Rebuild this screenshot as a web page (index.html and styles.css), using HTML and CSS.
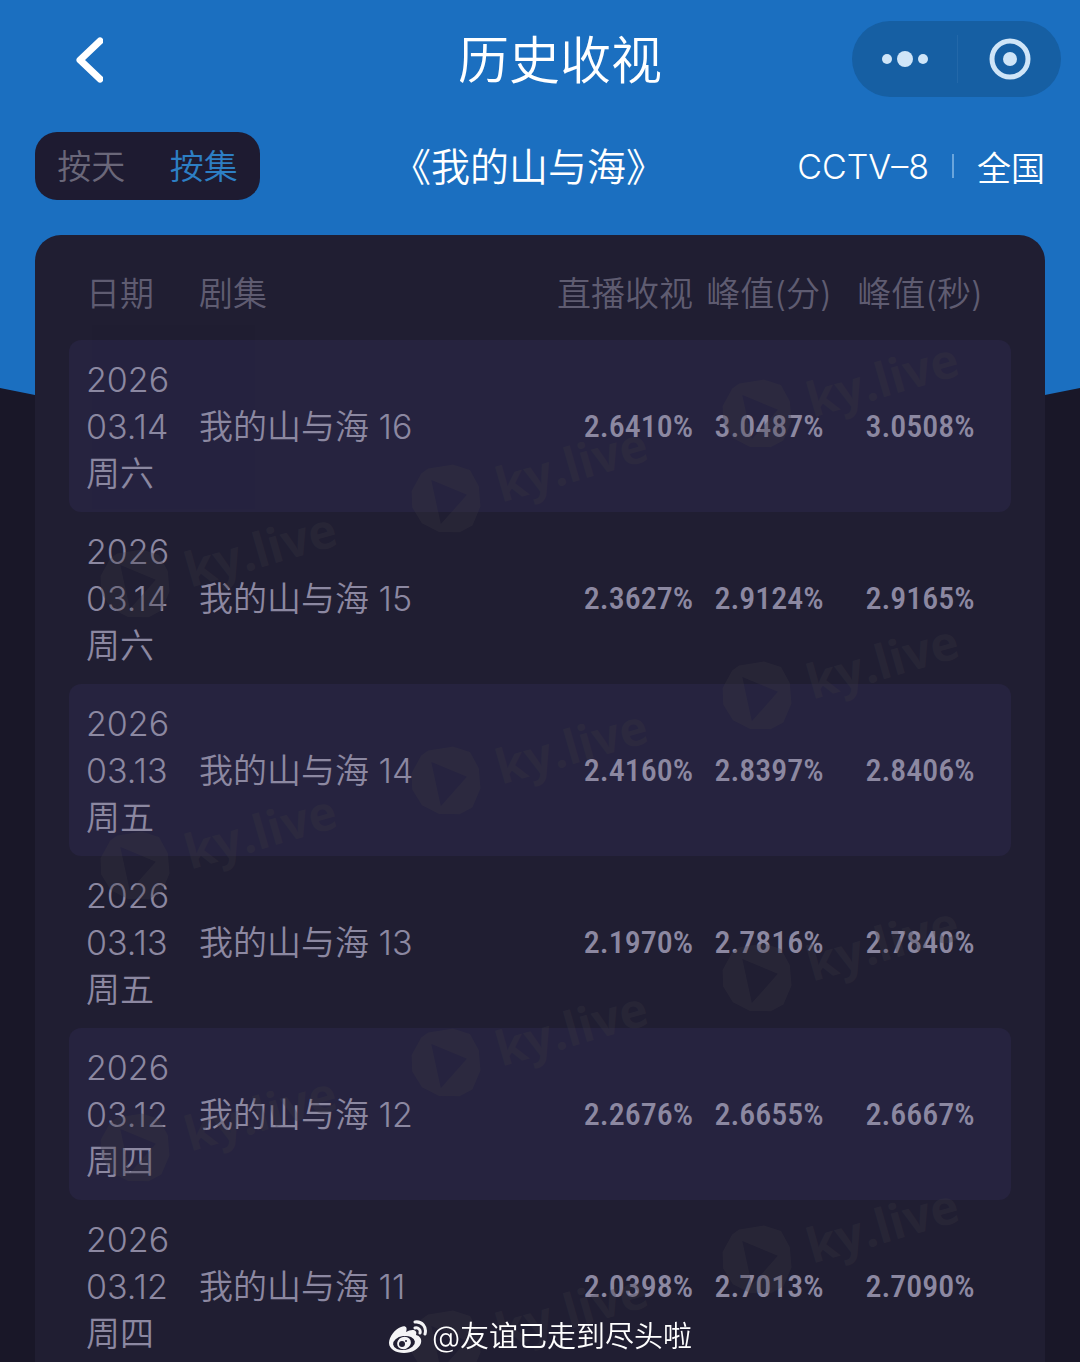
FILE: index.html
```html
<!DOCTYPE html>
<html lang="zh-CN">
<head>
    <meta charset="UTF-8">
    <meta name="viewport" content="width=device-width, initial-scale=1.0">
    <title>历史收视</title>
    <link rel="stylesheet" href="styles.css">
</head>
<body>
    <!-- shared logo, reused by every watermark -->
    <svg class="defs" aria-hidden="true">
        <symbol id="ky-logo" viewBox="0 0 72 72">
            <path fill-rule="evenodd" d="M27 1 L52 4 L67 14 L71 32 L67 52 L54 68 L40 71 L20 65 L6 52 L1 34 L5 18 L19 4 Z M27 13 L57 37 L24 58 Z"/>
        </symbol>
    </svg>

    <div class="page">
        <header class="navbar">
            <button class="back" type="button" aria-label="返回">
                <svg width="28" height="48" viewBox="0 0 28 48"><path d="M25 6 L5 25 L25 44"/></svg>
            </button>
            <h1>历史收视</h1>
            <div class="capsule">
                <button type="button" aria-label="更多">
                    <svg width="48" height="20" viewBox="0 0 48 20"><circle cx="7" cy="10" r="5"/><circle cx="25" cy="10" r="8"/><circle cx="43" cy="10" r="5"/></svg>
                </button>
                <button type="button" aria-label="关闭">
                    <svg width="44" height="44" viewBox="0 0 44 44"><circle class="ring" cx="23" cy="22" r="18"/><circle cx="23" cy="22" r="7"/></svg>
                </button>
            </div>
        </header>

        <div class="toolbar">
            <div class="switch">
                <button type="button">按天</button>
                <button type="button" class="active">按集</button>
            </div>
            <h2>《我的山与海》</h2>
            <div class="channel">
                <span>CCTV–8</span>
                <span class="divider"></span>
                <span>全国</span>
            </div>
        </div>

        <main class="panel">
            <table>
                <thead>
                    <tr>
                        <th class="date">日期</th>
                        <th class="episode">剧集</th>
                        <th class="live">直播收视</th>
                        <th class="peak">峰值(分)</th>
                        <th class="peak last">峰值(秒)</th>
                    </tr>
                </thead>
                <tbody>
                    <tr>
                        <td class="date">2026<br>03.14<br>周六</td>
                        <td class="episode">我的山与海 16</td>
                        <td class="live">2.6410%</td>
                        <td class="peak">3.0487%</td>
                        <td class="peak last">3.0508%</td>
                    </tr>
                    <tr>
                        <td class="date">2026<br>03.14<br>周六</td>
                        <td class="episode">我的山与海 15</td>
                        <td class="live">2.3627%</td>
                        <td class="peak">2.9124%</td>
                        <td class="peak last">2.9165%</td>
                    </tr>
                    <tr>
                        <td class="date">2026<br>03.13<br>周五</td>
                        <td class="episode">我的山与海 14</td>
                        <td class="live">2.4160%</td>
                        <td class="peak">2.8397%</td>
                        <td class="peak last">2.8406%</td>
                    </tr>
                    <tr>
                        <td class="date">2026<br>03.13<br>周五</td>
                        <td class="episode">我的山与海 13</td>
                        <td class="live">2.1970%</td>
                        <td class="peak">2.7816%</td>
                        <td class="peak last">2.7840%</td>
                    </tr>
                    <tr>
                        <td class="date">2026<br>03.12<br>周四</td>
                        <td class="episode">我的山与海 12</td>
                        <td class="live">2.2676%</td>
                        <td class="peak">2.6655%</td>
                        <td class="peak last">2.6667%</td>
                    </tr>
                    <tr>
                        <td class="date">2026<br>03.12<br>周四</td>
                        <td class="episode">我的山与海 11</td>
                        <td class="live">2.0398%</td>
                        <td class="peak">2.7013%</td>
                        <td class="peak last">2.7090%</td>
                    </tr>
                </tbody>
            </table>

            <div class="watermarks" aria-hidden="true">
                <div class="wm-column wm-left">
                    <div class="wm"><span><svg><use href="#ky-logo"/></svg>ky.live</span></div>
                    <div class="wm"><span><svg><use href="#ky-logo"/></svg>ky.live</span></div>
                    <div class="wm"><span><svg><use href="#ky-logo"/></svg>ky.live</span></div>
                </div>
                <div class="wm-column wm-middle">
                    <div class="wm"><span><svg><use href="#ky-logo"/></svg>ky.live</span></div>
                    <div class="wm"><span><svg><use href="#ky-logo"/></svg>ky.live</span></div>
                    <div class="wm"><span><svg><use href="#ky-logo"/></svg>ky.live</span></div>
                    <div class="wm"><span><svg><use href="#ky-logo"/></svg>ky.live</span></div>
                </div>
                <div class="wm-column wm-right">
                    <div class="wm"><span><svg><use href="#ky-logo"/></svg>ky.live</span></div>
                    <div class="wm"><span><svg><use href="#ky-logo"/></svg>ky.live</span></div>
                    <div class="wm"><span><svg><use href="#ky-logo"/></svg>ky.live</span></div>
                    <div class="wm"><span><svg><use href="#ky-logo"/></svg>ky.live</span></div>
                </div>
            </div>
        </main>
    </div>

    <div class="author">
        <svg width="40" height="34" viewBox="0 0 40 34" aria-hidden="true">
            <path fill="#f4f4f6" d="M13 7 C17 5 20 7 18 12 C23 9 30 9 28 15 C32 16 34 19 33 23 C31 29 24 33 16 33 C8 33 1 29 1 23 C1 17 7 9 13 7 Z"/>
            <ellipse fill="#201e32" cx="16" cy="23" rx="11" ry="7" transform="rotate(-8 16 23)"/>
            <ellipse fill="#f4f4f6" cx="16" cy="23" rx="7" ry="6" transform="rotate(-20 16 23)"/>
            <circle fill="#201e32" cx="14" cy="24" r="3"/>
            <circle fill="#201e32" cx="18" cy="21" r="1"/>
            <path fill="none" stroke="#f4f4f6" stroke-width="3" stroke-linecap="round" d="M27 2 C34 1 39 7 37 14 M27 8 C30 7 33 10 32 13"/>
        </svg>
        <span>@友谊已走到尽头啦</span>
    </div>
</body>
</html>
```
FILE: styles.css
```css
* {
    box-sizing: border-box;
}

body {
    margin: 0;
    font-family: Inter, "Noto Sans CJK SC", sans-serif;
    font-size: 34px;
    font-weight: 350;
    background-color: #191728;
    color: #fff;
}

button {
    border: none;
    background: none;
    padding: 0;
    font: inherit;
    color: inherit;
    cursor: pointer;
}

h1, h2 {
    margin: 0;
    padding-bottom: 4px;
    font-weight: 350;
}

.defs {
    display: none;
}

.page {
    position: relative;
    height: 100vh;
    overflow: hidden;
}

/* blue backdrop with a pointed lower edge */
.page::before {
    content: "";
    position: absolute;
    z-index: -1;
    top: 0;
    left: 0;
    width: 100%;
    height: 496px;
    background-color: #1b6fc0;
    clip-path: polygon(0 0, 100% 0, 100% 388px, 50% 100%, 0 388px);
}

.navbar {
    display: grid;
    grid-template-columns: 1fr auto 1fr;
    align-items: center;
    height: 118px;
    padding: 0 19px 0 59px;
}

.back {
    justify-self: start;
    display: flex;
    padding: 16px;
}

.back path {
    fill: none;
    stroke: #fff;
    stroke-width: 7;
    stroke-linecap: round;
    stroke-linejoin: round;
}

.navbar h1 {
    font-size: 51px;
}

.capsule {
    justify-self: end;
    display: flex;
    width: 209px;
    height: 76px;
    border-radius: 38px;
    background-color: #165fa3;
}

.capsule button {
    flex: 1;
    display: flex;
    align-items: center;
    justify-content: center;
}

.capsule button + button {
    position: relative;
}

.capsule button + button::before {
    content: "";
    position: absolute;
    left: 0;
    top: 14px;
    width: 1px;
    height: 48px;
    background-color: #2368a9;
}

.capsule circle {
    fill: #cfe5f8;
}

.capsule .ring {
    fill: none;
    stroke: #cfe5f8;
    stroke-width: 5;
}

.toolbar {
    display: flex;
    align-items: center;
    justify-content: space-between;
    height: 96px;
    padding: 0 35px;
}

.switch {
    display: flex;
    width: 225px;
    height: 68px;
    border-radius: 22px;
    background-color: #1e1b31;
    color: #6a6779;
}

.switch button {
    flex: 1;
    padding-bottom: 4px;
}

.switch .active {
    color: #2d7fc4;
}

.toolbar h2 {
    font-size: 39px;
}

.channel {
    display: flex;
    align-items: center;
    gap: 23px;
}

.divider {
    width: 2px;
    height: 24px;
    background-color: #6aa5dc;
}

.panel {
    position: relative;
    margin: 21px 35px 0;
    padding: 12px 34px;
    border-radius: 26px 26px 0 0;
    background-color: #201e32;
    overflow: hidden;
}

table {
    width: 100%;
    border-collapse: collapse;
    table-layout: fixed;
    color: #8c88a1;
}

th {
    height: 93px;
    padding: 0 0 4px;
    font-weight: 350;
    text-align: left;
    color: #5f5c71;
}

td {
    padding: 16px 0 15px;
    line-height: 47px;
}

tbody tr:nth-child(odd) td {
    background-color: #26233f;
}

td:first-child {
    border-radius: 12px 0 0 12px;
}

td:last-child {
    border-radius: 0 12px 12px 0;
}

.date {
    width: 130px;
    padding-left: 17px;
}

.live {
    width: 150px;
    text-align: right;
}

.peak {
    width: 152px;
    text-align: center;
}

.last {
    width: 166px;
    padding-right: 16px;
}

td.live, td.peak {
    font-family: "Roboto Condensed", Roboto, sans-serif;
    font-size: 32px;
    font-weight: 500;
}

/* watermark layer over the table */
.watermarks {
    position: absolute;
    inset: 0;
    display: grid;
    grid-template-columns: repeat(3, 1fr);
    padding: 0 50px 0 27px;
    color: #3a3842;
    opacity: 0.3;
    pointer-events: none;
}

.wm-left {
    margin-top: 185px;
}

.wm-middle {
    margin-top: 100px;
}

.wm-right {
    margin-top: 15px;
}

.wm {
    display: flex;
    align-items: center;
    justify-content: center;
    height: 282px;
}

.wm span {
    display: flex;
    align-items: center;
    gap: 16px;
    font-family: "Open Sans", sans-serif;
    font-size: 48px;
    font-weight: 700;
    line-height: 1;
    transform: rotate(-16deg);
}

.wm svg {
    width: 72px;
    height: 72px;
    fill: currentColor;
}

.author {
    position: fixed;
    left: 0;
    right: 0;
    bottom: 5px;
    display: flex;
    align-items: center;
    justify-content: center;
    gap: 4px;
    font-size: 29px;
    font-weight: 350;
    line-height: 40px;
}
```
